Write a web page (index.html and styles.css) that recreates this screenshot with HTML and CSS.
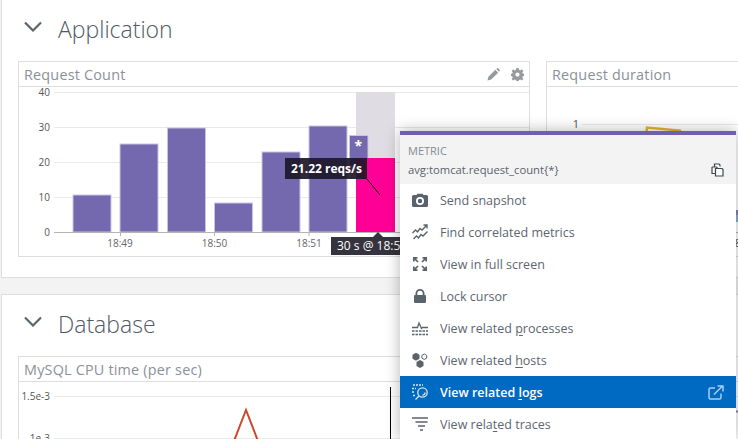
FILE: index.html
```html
<!DOCTYPE html>
<html lang="en">
<head>
    <meta charset="UTF-8">
    <title>Dashboard</title>
    <link rel="stylesheet" href="styles.css">
</head>
<body>
    <section class="group group-first">
        <header class="group-head">
            <svg class="chevron" viewBox="0 0 18 11"><path d="M1 1.500 9 9.500 17 1.500"/></svg>
            <h2>Application</h2>
        </header>
        <div class="widgets">
            <div class="widget">
                <div class="widget-head">
                    <span>Request Count</span>
                    <span class="widget-tools">
                        <svg viewBox="0 0 14 14"><path d="M0.500 13.500 1.500 9.500 9 2 12 5 4.500 12.500ZM10 1 11 0.200Q11.600-.1 12.200.4L13.600 1.800Q14 2.400 13.700 3L13 4Z"/></svg>
                        <svg viewBox="0 0 14 14"><path fill-rule="evenodd" d="M5.800 0H8.200L8.600 2 10 2.600 11.700 1.400 13.300 3.100 12.100 4.700 12.700 6 14 6.300V8.700L12.700 9 12.100 10.300 13.300 11.900 11.700 13.400 10 12.400 8.600 12.900 8.200 14H5.800L5.400 12.900 4 12.400 2.300 13.400 .7 11.900 1.900 10.300 1.300 9 0 8.700V6.300L1.300 6 1.900 4.700 .7 3.100 2.300 1.400 4 2.600 5.400 2ZM7 4.800A2.300 2.300 0 1 0 7 9.400 2.300 2.300 0 1 0 7 4.800Z"/></svg>
                    </span>
                </div>
                <div class="widget-body">
                    <svg class="chart" viewBox="19 87 510 169">
                        <g class="grid">
                            <path d="M54 92.500H530M54 127.500H530M54 162.500H530M54 197.500H530"/>
                        </g>
                        <rect class="hover-band" x="356" y="92" width="39" height="70"/>
                        <g class="bars">
                            <rect x="73" y="195" width="38" height="37"/>
                            <rect x="120" y="144" width="38" height="88"/>
                            <rect x="167.500" y="128" width="38" height="104"/>
                            <rect x="214.500" y="203" width="38" height="29"/>
                            <rect x="262" y="152" width="38" height="80"/>
                            <rect x="309" y="126" width="38" height="106"/>
                            <rect x="349.500" y="135.500" width="18.500" height="30"/>
                        </g>
                        <rect class="bar-active" x="356" y="158" width="39" height="74"/>
                        <text class="star" x="354.500" y="151">*</text>
                        <path class="axis" d="M54 232.500H530M120.500 232V236M214.500 232V236M309 232V236"/>
                        <g class="ticks">
                            <text x="120" y="247">18:49</text>
                            <text x="214.500" y="247">18:50</text>
                            <text x="309" y="247">18:51</text>
                        </g>
                        <g class="ylabels">
                            <text x="50" y="96">40</text>
                            <text x="50" y="131">30</text>
                            <text x="50" y="166">20</text>
                            <text x="50" y="201">10</text>
                            <text x="50" y="236">0</text>
                        </g>
                        <path class="leader" d="M367 179 380 195"/>
                    </svg>
                    <div class="value-tip">21.22 reqs/s</div>
                    <div class="time-tip">30 s @ 18:51:30</div>
                </div>
            </div>
            <div class="widget">
                <div class="widget-head"><span>Request duration</span></div>
                <div class="widget-body">
                    <svg class="chart" viewBox="547 87 510 169">
                        <path class="grid-line" d="M582 124.500H1050"/>
                        <text class="ylabel-one" x="579" y="128">1</text>
                        <path class="yellow" d="M646 136 647 127.500 680 130.500 681.500 136"/>
                        <rect x="736" y="210" width="2" height="5" fill="#8a7fc0"/>
                        <rect x="736" y="215" width="2" height="7" fill="#7fb6d6"/>
                        <path class="axis" d="M570 232.500H1050"/>
                        <text class="tick-cut" x="735" y="247">8</text>
                    </svg>
                </div>
            </div>
        </div>
    </section>

    <section class="group">
        <header class="group-head">
            <svg class="chevron" viewBox="0 0 18 11"><path d="M1 1.500 9 9.500 17 1.500"/></svg>
            <h2>Database</h2>
        </header>
        <div class="widgets">
            <div class="widget">
                <div class="widget-head"><span>MySQL CPU time (per sec)</span></div>
                <div class="widget-body">
                    <svg class="chart" viewBox="19 382 510 169">
                        <path class="grid" d="M54 396.500H530M54 438.500H530"/>
                        <g class="ylabels">
                            <text x="50" y="400">1.5e-3</text>
                            <text x="50" y="442">1e-3</text>
                        </g>
                        <path class="red" d="M234 441 246 410 258 441"/>
                        <path class="cursor" d="M390.500 387V445"/>
                    </svg>
                </div>
            </div>
            <div class="widget">
                <div class="widget-head"><span></span></div>
                <div class="widget-body">
                    <svg class="chart" viewBox="547 382 510 169">
                        <path class="grid" d="M570 396.500H1050"/>
                        <path d="M736 411.500H738" stroke="#8a7fc0" stroke-width="2"/>
                    </svg>
                </div>
            </div>
        </div>
    </section>

    <div class="popup">
        <div class="popup-head">
            <div class="popup-label">METRIC</div>
            <div class="popup-query">
                <span>avg:tomcat.request_count{*}</span>
                <svg viewBox="0 0 13 14"><path d="M3.500 3.500V1H8L9 2V3.500M1 4H5.500L6.500 5M1 4V10.500H4M4.500 5.500H11L12 6.500V13H4.500Z"/></svg>
            </div>
        </div>
        <ul class="menu">
            <li>
                <svg class="icon" viewBox="0 0 18 18"><path fill-rule="evenodd" d="M2.500 4H5.500L6.500 2.800H11.500L12.500 4H15.500Q17 4 17 5.500V14.500Q17 16 15.500 16H2.500Q1 16 1 14.500V5.500Q1 4 2.500 4ZM9 6A4 4 0 1 0 9 14 4 4 0 1 0 9 6ZM9 7.800A2.200 2.200 0 1 1 9 12.200 2.200 2.200 0 1 1 9 7.800Z"/></svg>
                <span>Send snapshot</span>
            </li>
            <li>
                <svg class="icon line jag" viewBox="0 0 18 18"><path d="M1.500 10 4.500 7 6.500 9 9 5.500 11 7 15.500 2.500M12.500 2H16V5.500M2.500 16 5.500 13 7.500 15 10 11.500 12 13 16.500 8.500"/></svg>
                <span>Find correlated metrics</span>
            </li>
            <li>
                <svg class="icon line" viewBox="0 0 18 18"><path d="M2.800 6.500V2.800H6.500M2.800 2.800 7 7M11.500 2.800H15.200V6.500M15.200 2.800 11 7M2.800 11.500V15.200H6.500M2.800 15.200 7 11M11.500 15.200H15.200V11.500M15.200 15.200 11 11"/></svg>
                <span>View in full screen</span>
            </li>
            <li>
                <svg class="icon" viewBox="0 0 18 18"><path fill-rule="evenodd" d="M4.500 8V6.500A4.500 4.500 0 0 1 13.500 6.500V8H14Q15 8 15 9V15Q15 16 14 16H4Q3 16 3 15V9Q3 8 4 8ZM6.300 8H11.700V6.500A2.700 2.700 0 0 0 6.300 6.500Z"/></svg>
                <span>Lock cursor</span>
            </li>
            <li>
                <svg class="icon line thin" viewBox="0 0 18 18"><path d="M1 8.500H6.500L8 4 10.500 9.500 11.500 8.500H17"/><path class="dashes" d="M1 12H17M1 15.500H17"/></svg>
                <span>View related <u>p</u>rocesses</span>
            </li>
            <li>
                <svg class="icon" viewBox="0 0 18 18"><path d="M5 1.700 8.500 3.700V7.700L5 9.700 1.500 7.700V3.700ZM9 9 12.500 11V15L9 17 5.500 15V11Z"/><path class="hex-open" d="M13.300 3 15.700 4.400V7.100L13.300 8.500 10.900 7.100V4.400Z"/></svg>
                <span>View related <u>h</u>osts</span>
            </li>
            <li class="active">
                <svg class="icon line thin" viewBox="0 0 18 18"><path class="dots" d="M2 2H12M1 5.500H5M1 9H4M2 12.500H5"/><circle cx="11.500" cy="9.500" r="4.700"/><path d="M8 13 4.500 16.500M11.500 12A2.500 2.500 0 0 0 14 9.500"/></svg>
                <span>View related <u>l</u>ogs</span>
                <svg class="external" viewBox="0 0 16 15"><path d="M13 8.500V12.500Q13 14 11.500 14H2.500Q1 14 1 12.500V4.500Q1 3 2.500 3H7M6 9.500 14 1.500M9.500 1H15V6.500"/></svg>
            </li>
            <li>
                <svg class="icon line" viewBox="0 0 18 18"><path d="M1 3H17M4.500 7H16.500M7 11H14M9 15H12"/></svg>
                <span>View rela<u>t</u>ed traces</span>
            </li>
        </ul>
    </div>
</body>
</html>
```

FILE: styles.css
```css
html, body {
    height: 439px;
    overflow: hidden;
}

body {
    margin: 0;
    background: #f3f3f3;
    font-family: "Open Sans", sans-serif;
    position: relative;
}

.group {
    background: #fff;
    border: 1px solid #dedede;
    margin: 16px 0 0 1px;
    width: 1200px;
    height: 300px;
    padding: 0 16px;
    box-sizing: border-box;
}

.group-first {
    margin-top: -1px;
    height: 279px;
}

.group-head {
    height: 61px;
    display: flex;
    align-items: flex-start;
}

.group-head h2 {
    margin: 12px 0 0 16px;
    font-size: 23px;
    font-weight: 300;
    line-height: 34px;
    color: #4f5a64;
}

.chevron {
    width: 18px;
    height: 11px;
    margin: 21px 0 0 6px;
    fill: none;
    stroke: #5a656f;
    stroke-width: 2.200;
}

.widgets {
    display: flex;
    gap: 16px;
}

.widget {
    width: 512px;
    height: 196px;
    flex: none;
    box-sizing: border-box;
    border: 1px solid #dedede;
    background: #fff;
}

.widget-head {
    height: 24px;
    border-bottom: 1px solid #dedede;
    display: flex;
    justify-content: space-between;
    align-items: center;
    padding: 0 5px;
    font-size: 14.400px;
    color: #8b9198;
    letter-spacing: 0.200px;
}

.widget-tools {
    display: flex;
    gap: 11px;
}

.widget-tools svg {
    width: 13px;
    height: 13px;
    fill: #96999d;
}

.widget-body {
    position: relative;
    height: 169px;
}

.chart {
    display: block;
    width: 510px;
    height: 169px;
    overflow: hidden;
    font-family: "Open Sans", sans-serif;
    font-size: 10px;
}

.grid, .grid-line {
    fill: none;
    stroke: #e9e9e9;
}

.axis {
    fill: none;
    stroke: #b4b4b4;
}

.hover-band {
    fill: #dfdde3;
}

.bars rect {
    fill: #7469ae;
    stroke: #c9c5e0;
    stroke-width: 1;
}

.bar-active {
    fill: #ff0096;
}

.star {
    fill: #fff;
    font-size: 14px;
    font-weight: 700;
}

.ticks text {
    fill: #666;
    text-anchor: middle;
}

.ylabels text {
    fill: #555;
    text-anchor: end;
}

.ylabel-one {
    fill: #555;
    font-size: 11px;
    text-anchor: end;
}

.tick-cut {
    fill: #444;
}

.leader, .cursor {
    stroke: #000;
    fill: none;
}

.yellow {
    fill: none;
    stroke: #e3b628;
    stroke-width: 2.400;
}

.red {
    fill: none;
    stroke: #c9492c;
    stroke-width: 2;
}

.value-tip {
    position: absolute;
    left: 266px;
    top: 71px;
    width: 82px;
    height: 21px;
    box-sizing: border-box;
    padding-left: 6px;
    background: rgba(28, 24, 40, 0.92);
    color: #fff;
    font-size: 12px;
    font-weight: 700;
    line-height: 21px;
    white-space: nowrap;
}

.time-tip {
    position: absolute;
    left: 312px;
    top: 150px;
    height: 18px;
    padding: 0 6px;
    background: #35333d;
    color: #fff;
    font-size: 12px;
    line-height: 18px;
    white-space: nowrap;
}

.time-tip::before {
    content: "";
    position: absolute;
    left: 41px;
    top: -5px;
    border: 6px solid transparent;
    border-top: 0;
    border-bottom-color: #35333d;
}

.popup {
    position: absolute;
    left: 400px;
    top: 131px;
    width: 336px;
    background: #fff;
    border-top: 4px solid #6f5fae;
    box-shadow: 0 0 14px rgba(0, 0, 0, 0.3);
}

.popup-head {
    height: 49px;
    box-sizing: border-box;
    background: #f3f3f3;
    padding: 8px 12px 0 8px;
}

.popup-label {
    font-size: 11px;
    line-height: 16px;
    color: #848b92;
}

.popup-query {
    display: flex;
    justify-content: space-between;
    align-items: center;
    margin-top: 2px;
    font-size: 11.250px;
    line-height: 18px;
    color: #59636d;
}

.popup-query svg {
    width: 13px;
    height: 14px;
    fill: #fff;
    stroke: #3f4850;
    stroke-width: 1.200;
}

.menu {
    list-style: none;
    margin: 0;
    padding: 0;
}

.menu li {
    height: 32px;
    display: flex;
    align-items: center;
    padding-left: 11px;
    font-size: 12.500px;
    color: #5c666f;
}

.menu u {
    text-underline-offset: 2px;
}

.menu .icon {
    width: 18px;
    height: 18px;
    margin-right: 11px;
    flex: none;
    fill: #59636c;
}

.menu .icon.line {
    fill: none;
    stroke: #59636c;
    stroke-width: 1.700;
}

.menu .icon.jag {
    stroke-width: 1.400;
}

.menu .icon.thin {
    stroke-width: 1.300;
}

.dashes {
    stroke-dasharray: 2.500 1;
    stroke-width: 1.600;
}

.dots {
    stroke-dasharray: 2 1;
}

.hex-open {
    fill: #fff;
    stroke: #59636c;
    stroke-width: 1;
}

.menu li.active {
    background: #0069c2;
    color: #fff;
    font-weight: 600;
}

.menu li.active .icon {
    stroke: #d6e8f7;
}

.external {
    width: 16px;
    height: 15px;
    margin-left: auto;
    margin-right: 12px;
    fill: none;
    stroke: #a8cfee;
    stroke-width: 1.500;
}
```
